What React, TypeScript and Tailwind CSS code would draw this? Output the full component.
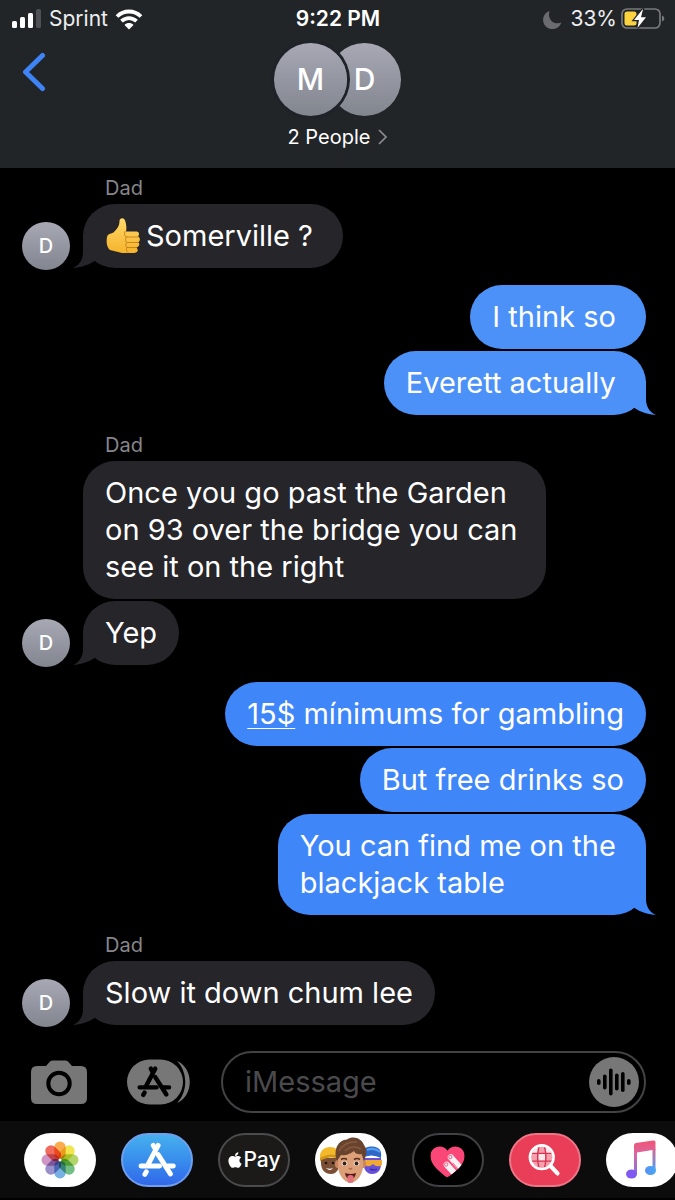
import type { ReactNode } from "react";
import { FaApple } from "react-icons/fa";

type Message = {
  text?: string;
  content?: ReactNode;
  tail?: boolean;
};

type Group = {
  from: "dad" | "me";
  tone?: string;
  messages: Message[];
};

function ThumbsUp() {
  return (
    <svg
      role="img"
      aria-label="thumbs up"
      viewBox="0 0 36 38"
      className="mr-[5px] -mt-2 -mb-1 inline-block h-[38px] w-9 align-middle"
    >
      <defs>
        <linearGradient id="thumb" x1="0" y1="0" x2="0" y2="1">
          <stop offset="0" stopColor="#ffd96a" />
          <stop offset="1" stopColor="#f5b32b" />
        </linearGradient>
      </defs>
      <path
        d="M2 20C1 25 2 31 5 33C9 34 13 35 17 36H29C33 36 34 32 31 30.500C35 30 35 26 33 25.500C36 24 35 20 33 19.500C35 17 34 14.500 31 14.500H21C22 11 21 5 19.500 2.500C18 .500 14.500 1 14.500 4C14.500 9 12 12 9 15C7 17 3 16 2 20Z"
        fill="url(#thumb)"
      />
      <path
        d="M20 14.500C19 17 19.500 18.500 21 20M21 20H33M22 25.500H33M22 30.500H31M22 20C20 21 20 24.500 22 25.500C20.500 26.500 20.500 29.500 22 30.500C21 32 21 34 23 35.500"
        fill="none"
        stroke="#c9851c"
        strokeWidth="1"
        strokeLinecap="round"
      />
    </svg>
  );
}

const groups: Group[] = [
  {
    from: "dad",
    messages: [
      {
        content: (
          <>
            <ThumbsUp />
            Somerville ?&nbsp;
          </>
        ),
        tail: true,
      },
    ],
  },
  {
    from: "me",
    tone: "bg-[#4c91f8] text-[#4c91f8]",
    messages: [
      { text: "I think so\u00a0" },
      { text: "Everett actually\u00a0", tail: true },
    ],
  },
  {
    from: "dad",
    messages: [
      {
        text: "Once you go past the Garden on 93 over the bridge you can see it on the right",
      },
      { text: "Yep", tail: true },
    ],
  },
  {
    from: "me",
    tone: "bg-[#3f86f8] text-[#3f86f8]",
    messages: [
      {
        content: (
          <>
            <a
              href="#amount"
              className="underline decoration-1 underline-offset-4"
            >
              15$
            </a>{" "}
            mínimums for gambling
          </>
        ),
      },
      { text: "But free drinks so" },
      { text: "You can find me on the\u00a0\nblackjack table", tail: true },
    ],
  },
  {
    from: "dad",
    messages: [{ text: "Slow it down chum lee", tail: true }],
  },
];

function Tail({ side }: { side: "left" | "right" }) {
  return (
    <svg
      aria-hidden
      viewBox="0 0 32 34"
      className={
        side === "left"
          ? "absolute bottom-0 -left-[10px] h-[34px] w-8"
          : "absolute -right-[10px] bottom-0 h-[34px] w-8 -scale-x-100"
      }
    >
      <path
        d="M10 0V18C10 25 7 31 0 34C7 33.500 15 31.500 21.500 27L32 18V0Z"
        fill="currentColor"
      />
    </svg>
  );
}

function Bubble({
  message,
  mine,
  tone,
}: {
  message: Message;
  mine: boolean;
  tone: string;
}) {
  return (
    <div
      className={`relative max-w-[463px] rounded-[32px] px-[22px] pt-[13px] pb-[14px] ${tone}`}
    >
      {message.tail && <Tail side={mine ? "right" : "left"} />}
      <p className="relative text-[29px] leading-[37px] whitespace-pre-line text-white">
        {message.content ?? message.text}
      </p>
    </div>
  );
}

function MessageGroup({ group }: { group: Group }) {
  const mine = group.from === "me";
  return (
    <section>
      {!mine && (
        <h2 className="mb-[3px] pl-[105px] text-[20px] leading-[26px] text-[#86868b]">
          Dad
        </h2>
      )}
      <ul className="flex flex-col gap-[2px]">
        {group.messages.map((message, i) => (
          <li
            key={i}
            className={
              mine
                ? "flex justify-end pr-[29px]"
                : "flex items-end gap-[13px] pl-[22px]"
            }
          >
            {!mine && (
              <div className="-mb-[2px] w-12 shrink-0">
                {message.tail && (
                  <div className="flex h-12 items-center justify-center rounded-full bg-linear-to-b from-[#a7a8b4] to-[#82868f] text-[20px] font-medium text-white">
                    D
                  </div>
                )}
              </div>
            )}
            <Bubble
              message={message}
              mine={mine}
              tone={group.tone ?? "bg-[#26252a] text-[#26252a]"}
            />
          </li>
        ))}
      </ul>
    </section>
  );
}

function StatusBar() {
  return (
    <div className="grid grid-cols-3 items-center pt-[5px] pr-[10px] pl-[11px] text-[21px] leading-7 text-[#eeeeef]">
      <div className="flex items-center gap-[7px]">
        <svg viewBox="0 0 31 20" className="h-5 w-[31px]" aria-hidden>
          <g fill="#fff">
            <rect x="1" y="12" width="5" height="7" rx="1.500" />
            <rect x="9" y="8" width="5" height="11" rx="1.500" />
            <rect x="17" y="4" width="5" height="15" rx="1.500" />
            <rect x="25" y="0" width="5" height="19" rx="1.500" fill="#4e5053" />
          </g>
        </svg>
        <span>Sprint</span>
        <svg viewBox="0 0 28 21" className="h-[21px] w-7" aria-hidden>
          <g fill="none" stroke="#fff" strokeWidth="3.800">
            <path d="M2 7.500C9 .800 19 .800 26 7.500" />
            <path d="M6.500 12.200C11 8 17 8 21.500 12.200" />
          </g>
          <path d="M9.500 16C12 13.400 16 13.400 18.500 16L14 20.500Z" fill="#fff" />
        </svg>
      </div>
      <span className="text-center font-semibold text-white">9:22 PM</span>
      <div className="flex items-center justify-end gap-1">
        <svg viewBox="0 0 19 19" className="mr-1 h-[19px] w-[19px]" aria-hidden>
          <path
            d="M6.500 1A9.300 9.300 0 1 0 18.300 12.500C11 15.500 4 9.500 6.500 1Z"
            fill="#6b6c70"
          />
        </svg>
        <span>33%</span>
        <svg viewBox="0 0 44 22" className="h-[22px] w-11" aria-hidden>
          <rect
            x="1"
            y="1"
            width="38"
            height="19"
            rx="5"
            fill="none"
            stroke="#78797c"
            strokeWidth="1.700"
          />
          <path d="M41 7.500C44 8.500 44 12.500 41 13.500Z" fill="#78797c" />
          <rect x="3.500" y="3.500" width="12" height="14" rx="2.500" fill="#fcd33f" />
          <path
            d="M21.500 1.500L13 12H18L16.500 20L25 9.300H20L22 1.500Z"
            fill="#fff"
            stroke="#222528"
            strokeWidth="2.400"
            paintOrder="stroke"
          />
        </svg>
      </div>
    </div>
  );
}

function Header() {
  return (
    <header className="h-[168px] shrink-0 bg-[#222528]">
      <StatusBar />
      <div className="grid grid-cols-[1fr_auto_1fr] items-start pt-[10px]">
        <button type="button" aria-label="Back" className="mt-[9px] ml-[22px] w-6">
          <svg viewBox="0 0 24 40" className="h-10 w-6">
            <path
              d="M20.500 3.500L3.500 20L20.500 36.500"
              fill="none"
              stroke="#3f84f7"
              strokeWidth="5"
              strokeLinecap="round"
              strokeLinejoin="round"
            />
          </svg>
        </button>
        <button type="button" className="flex flex-col items-center">
          <span className="flex text-[30px] font-medium text-white">
            <span className="z-10 flex h-[73px] w-[73px] items-center justify-center rounded-full bg-linear-to-b from-[#a7a8b4] to-[#82868f] ring-3 ring-[#20222a]">
              M
            </span>
            <span className="-ml-[19px] flex h-[73px] w-[73px] items-center justify-center rounded-full bg-linear-to-b from-[#a7a8b4] to-[#82868f]">
              D
            </span>
          </span>
          <span className="mt-[7px] flex items-center gap-2 text-[20px] leading-7 text-white">
            2 People
            <svg viewBox="0 0 9 16" className="h-4 w-[9px]" aria-hidden>
              <path
                d="M1 1L8 8L1 15"
                fill="none"
                stroke="#8a8b90"
                strokeWidth="1.700"
              />
            </svg>
          </span>
        </button>
      </div>
    </header>
  );
}

function AppStoreGlyph() {
  return (
    <g fill="none" stroke="currentColor" strokeWidth="5" strokeLinecap="round">
      <path d="M20.500 3L10.500 22" />
      <path d="M15.500 3L17.500 6.500" />
      <path d="M3 24H22M30 24H36" />
      <path d="M20.500 12.500L33 32" />
      <path d="M8.500 30L7 32.500" />
    </g>
  );
}

const bars = [
  { x: 9, h: 6 },
  { x: 15, h: 15 },
  { x: 21, h: 27 },
  { x: 27, h: 17 },
  { x: 33, h: 20 },
  { x: 39, h: 6 },
];

function Composer() {
  return (
    <form
      className="flex items-center pt-[26px] pr-[29px] pb-2 pl-[31px]"
      onSubmit={(e) => e.preventDefault()}
    >
      <button type="button" aria-label="Camera" className="shrink-0">
        <svg viewBox="0 0 56 44" className="h-11 w-14">
          <path
            d="M6 6H15L19 1.500Q20 .500 22 .500H34Q36 .500 37 1.500L41 6H50Q56 6 56 12V38Q56 44 50 44H6Q0 44 0 38V12Q0 6 6 6Z"
            fill="#777"
          />
          <circle cx="28" cy="23.500" r="10.700" fill="none" stroke="#000" strokeWidth="4" />
        </svg>
      </button>
      <button type="button" aria-label="Apps" className="ml-10 shrink-0">
        <svg viewBox="0 0 63 46" className="h-[46px] w-[63px]">
          <path d="M50 2C67 9 67 37 50 44C61 33 61 13 50 2Z" fill="#777" />
          <rect x="0" y="0.500" width="56" height="45" rx="22.500" fill="#777" />
          <g transform="translate(10 7) scale(.89)" className="text-black">
            <AppStoreGlyph />
          </g>
        </svg>
      </button>
      <div className="ml-[31px] flex h-[62px] min-w-0 flex-1 items-center rounded-full border-2 border-[#434346] pr-[5px] pl-[22px]">
        <input
          type="text"
          aria-label="iMessage"
          placeholder="iMessage"
          className="min-w-0 flex-1 bg-transparent text-[29px] leading-9 text-white outline-none placeholder:text-[#4a4a4d]"
        />
        <button type="button" aria-label="Record audio" className="shrink-0">
          <svg viewBox="0 0 50 50" className="h-[50px] w-[50px]">
            <circle cx="25" cy="25" r="25" fill="#777" />
            {bars.map((b) => (
              <rect
                key={b.x}
                x={b.x - 1}
                y={25 - b.h / 2}
                width="3.600"
                height={b.h}
                rx="1.800"
                fill="#000"
              />
            ))}
          </svg>
        </button>
      </div>
    </form>
  );
}

const petals = [
  "#f9a23a",
  "#efe23c",
  "#abd05a",
  "#62b777",
  "#68a7e0",
  "#8f85c5",
  "#c98abf",
  "#ee5c4d",
];

function PhotosIcon() {
  return (
    <svg viewBox="0 0 72 54" className="h-full w-full isolate">
      {petals.map((color, i) => (
        <rect
          key={color}
          x="30.300"
          y="8.500"
          width="11.400"
          height="18"
          rx="5.700"
          fill={color}
          opacity=".9"
          transform={`rotate(${i * 45} 36 27)`}
          className="mix-blend-multiply"
        />
      ))}
      <circle cx="36" cy="27" r="1.500" fill="#fff" />
    </svg>
  );
}

function StoreIcon() {
  return (
    <svg viewBox="0 0 72 54" className="h-full w-full text-white">
      <g transform="translate(15.500 8) scale(1.060)">
        <AppStoreGlyph />
      </g>
    </svg>
  );
}

function MemojiIcon() {
  return (
    <svg viewBox="0 0 72 54" className="h-full w-full">
      {/* left face, yellow beanie */}
      <path d="M6 25C5 36 9 41 16 41C22 41 25 36 24 25Z" fill="#7a4f35" />
      <path d="M5 26C4 18 9 14 15 14C22 14 25 19 25 24Q14 20 5 26Z" fill="#f3b92b" />
      <path d="M5 25Q14 19 25 23V26Q14 22 5 28Z" fill="#d39718" />
      <circle cx="11" cy="30" r="1.300" fill="#20130d" />
      <circle cx="18" cy="30" r="1.300" fill="#20130d" />
      <path d="M11 35Q15 36.500 18 35Q15 39 11 35Z" fill="#fff" />
      {/* right face, blue cap and shades */}
      <path d="M48 25H66C67 36 64 41 57 41C51 41 48 36 48 25Z" fill="#6950d8" />
      <path d="M47 25C46 16 51 13 57 13.500C65 14 67 18 66 25Q56 20 47 25Z" fill="#2e67c7" />
      <path d="M52 17Q59 14 65 19" stroke="#55a0ee" strokeWidth="2" fill="none" />
      <path d="M50 27H67V32Q62 35 58 31Q54 35 50 32Z" fill="#f0a934" />
      <path d="M55 36Q59 38 62 36" stroke="#3f2ba0" strokeWidth="1.500" fill="none" />
      {/* middle face */}
      <ellipse cx="22.500" cy="31" rx="2.500" ry="4" fill="#c98660" />
      <ellipse cx="48.500" cy="31" rx="2.500" ry="4" fill="#c98660" />
      <path d="M23 22Q35 12 48 22V33C48 42 41 50 35.500 50C30 50 23 42 23 33Z" fill="#dd9f77" />
      <path
        d="M22 28C18 17 23 7 32 6.500C39 2 47 6 49 12C53 17 51 23 49 28L46.500 21Q41 22 39 18Q33 23 26 22Z"
        fill="#68432d"
      />
      <path d="M24 18Q30 8 42 9M30 18Q37 11 46 16" stroke="#855a3e" strokeWidth="1.500" fill="none" />
      <path d="M26 26.500Q29 24.500 32 26.500M39 26.500Q42 24.500 45 26.500" stroke="#53301d" strokeWidth="1.600" fill="none" />
      <ellipse cx="29.500" cy="30.500" rx="2.800" ry="2.200" fill="#fff" />
      <ellipse cx="41.500" cy="30.500" rx="2.800" ry="2.200" fill="#fff" />
      <circle cx="29.500" cy="30.500" r="2" fill="#35221a" />
      <circle cx="41.500" cy="30.500" r="2" fill="#35221a" />
      <path d="M34 35Q35.500 37 37 35" stroke="#b06c48" strokeWidth="1.500" fill="none" />
      <path d="M30 40Q35.500 42 41 40Q40 46 35.500 46Q31 46 30 40Z" fill="#54171a" />
      <path d="M32.500 43Q35.500 41 38.500 43V47Q38.500 50 35.500 50Q32.500 50 32.500 47Z" fill="#e2707d" />
    </svg>
  );
}

function HeartIcon() {
  return (
    <svg viewBox="0 0 72 54" className="h-full w-full">
      <clipPath id="heart">
        <path d="M35 46C27 40 17 32 17 23C17 12 30 9 35.500 17C41 9 54 12 54 23C54 32 44 40 35 46Z" />
      </clipPath>
      <g clipPath="url(#heart)">
        <rect width="72" height="54" fill="#fb4778" />
        <g stroke="#f8f1f3" strokeWidth="6.500" strokeLinecap="round">
          <path d="M39 24L55 42" />
          <path d="M34.500 32L50 49" />
        </g>
        <g fill="none" stroke="#e8547d" strokeWidth="1">
          <circle cx="38.500" cy="23.800" r="1.800" />
          <circle cx="34" cy="31.800" r="1.800" />
          <path d="M41 30L48 38" />
        </g>
      </g>
    </svg>
  );
}

function ImagesIcon() {
  return (
    <svg viewBox="0 0 72 54" className="h-full w-full">
      <clipPath id="lens">
        <circle cx="32.500" cy="24" r="11.500" />
      </clipPath>
      <g clipPath="url(#lens)">
        <rect x="20" y="11" width="26" height="26" fill="#f6a0ae" />
        <path d="M29 20.500H36V27.500H29ZM21 14H28V20H21ZM37 14H45V20H37Z" fill="#fff" opacity=".75" />
        <g fill="none" stroke="#d93350" strokeWidth="1.500">
          <path d="M20 19.800H45M20 28.200H45" />
          <path d="M30 11Q26 24 30 37M35 11Q39 24 35 37" />
        </g>
      </g>
      <circle cx="32.500" cy="24" r="12.800" fill="none" stroke="#fff" strokeWidth="2.800" />
      <path d="M42 33.500L49.500 41.500" stroke="#fff" strokeWidth="4.500" strokeLinecap="round" />
    </svg>
  );
}

function MusicIcon() {
  return (
    <svg viewBox="0 0 72 54" className="h-full w-full">
      <defs>
        <linearGradient id="note" x1="38" y1="0" x2="50" y2="0" gradientUnits="userSpaceOnUse">
          <stop offset="0" stopColor="#5a8df5" />
          <stop offset="1" stopColor="#45a9f2" />
        </linearGradient>
        <linearGradient id="stem" x1="0" y1="8" x2="0" y2="44" gradientUnits="userSpaceOnUse">
          <stop offset="0" stopColor="#f05575" />
          <stop offset=".35" stopColor="#d967a0" />
          <stop offset="1" stopColor="#7a6ff0" />
        </linearGradient>
        <linearGradient id="stemRight" x1="0" y1="14" x2="0" y2="38" gradientUnits="userSpaceOnUse">
          <stop offset="0" stopColor="#e4608c" />
          <stop offset="1" stopColor="#4aa3f2" />
        </linearGradient>
      </defs>
      <path
        d="M28 12Q28 10.300 30 10L47 7.500Q49.500 7 49.500 9V17H46.500L31 19.500V41H28Z"
        fill="url(#stem)"
      />
      <path d="M46.500 16H49.500V37H46.500Z" fill="url(#stemRight)" />
      <ellipse cx="25.500" cy="41" rx="5.500" ry="4.500" fill="#8059f3" />
      <ellipse cx="44.500" cy="37.500" rx="5.500" ry="4.500" fill="url(#note)" />
    </svg>
  );
}

const apps = [
  { name: "Photos", style: "bg-white", icon: <PhotosIcon /> },
  {
    name: "App Store",
    style: "border-2 border-[#6f9fee] bg-linear-to-b from-[#46b0ed] to-[#3267ea]",
    icon: <StoreIcon />,
  },
  {
    name: "Apple Pay",
    style: "border-2 border-[#4b4b4d] bg-[#1b1a19]",
    icon: (
      <span className="flex items-center justify-center text-[21px] font-medium text-white">
        <FaApple className="h-[18px] w-4" />
        Pay
      </span>
    ),
  },
  { name: "Memoji", style: "bg-white", icon: <MemojiIcon /> },
  {
    name: "Digital Touch",
    style: "border-2 border-[#424244] bg-black",
    icon: <HeartIcon />,
  },
  {
    name: "Images",
    style: "border-2 border-[#ee7586] bg-[#e93d58]",
    icon: <ImagesIcon />,
  },
  { name: "Music", style: "bg-white", icon: <MusicIcon /> },
];

function AppDrawer() {
  return (
    <nav
      aria-label="Apps"
      className="flex gap-[25px] overflow-hidden border-b-2 border-black bg-[#0c0c0c] pt-3 pb-[11px] pl-6"
    >
      {apps.map((app) => (
        <button
          key={app.name}
          type="button"
          aria-label={app.name}
          className={`flex h-[54px] w-[72px] shrink-0 items-center justify-center overflow-hidden rounded-full ${app.style}`}
        >
          {app.icon}
        </button>
      ))}
    </nav>
  );
}

export default function App() {
  return (
    <div className="flex min-h-screen w-full flex-col overflow-hidden bg-black font-['Inter',sans-serif]">
      <Header />
      <main className="flex flex-1 flex-col gap-[17px] pt-[7px]">
        {groups.map((group, i) => (
          <MessageGroup key={i} group={group} />
        ))}
      </main>
      <Composer />
      <AppDrawer />
    </div>
  );
}
